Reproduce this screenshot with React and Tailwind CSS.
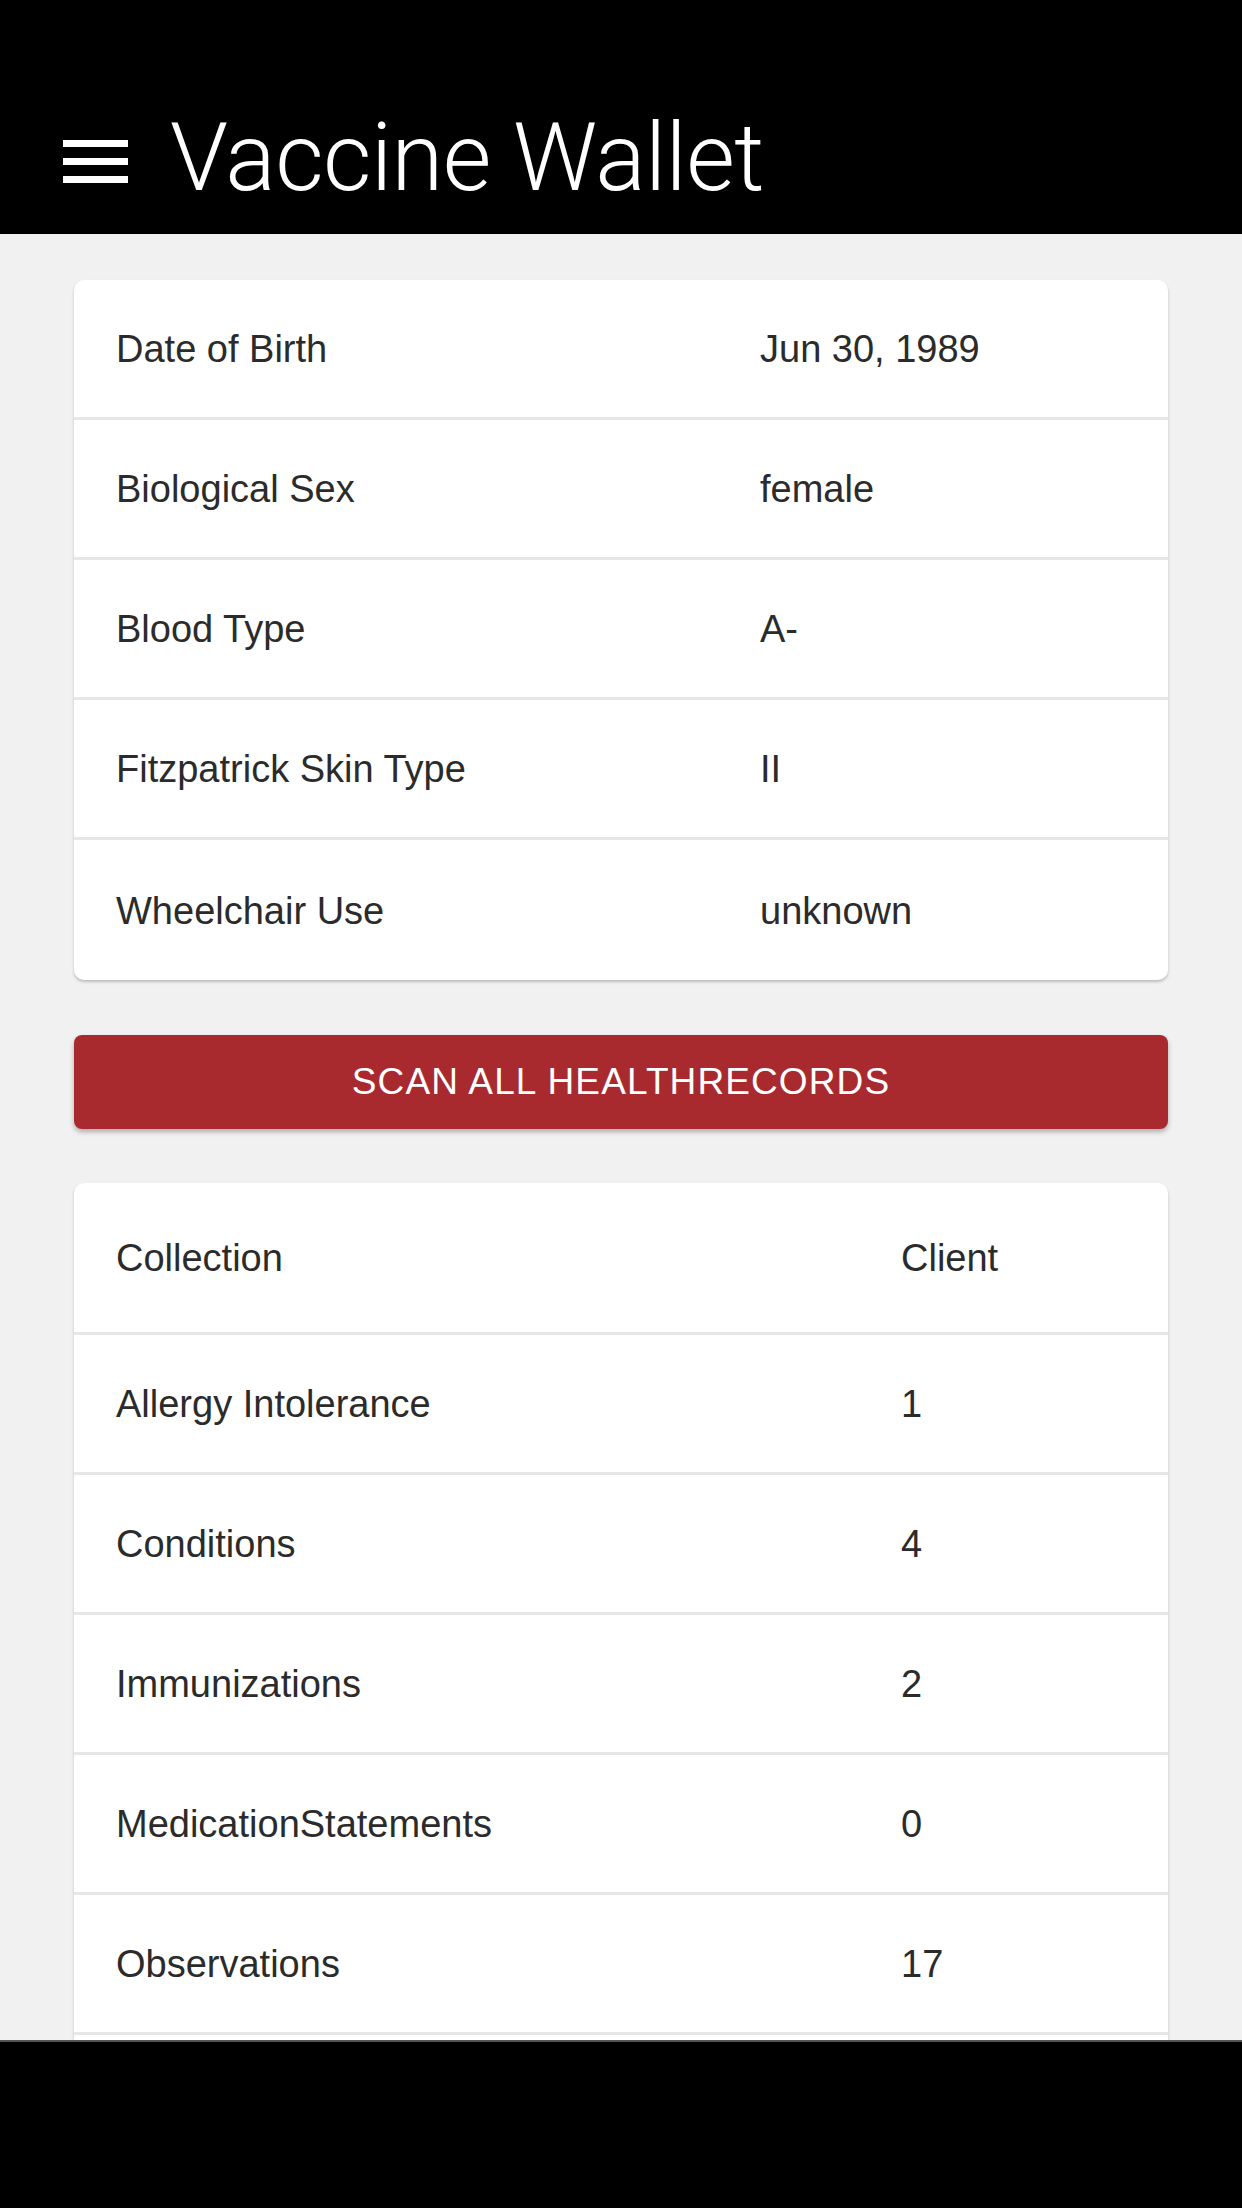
import React from "react";

const profile = [
  ["Date of Birth", "Jun 30, 1989"],
  ["Biological Sex", "female"],
  ["Blood Type", "A-"],
  ["Fitzpatrick Skin Type", "II"],
  ["Wheelchair Use", "unknown"],
];

const collections = [
  ["Allergy Intolerance", "1"],
  ["Conditions", "4"],
  ["Immunizations", "2"],
  ["MedicationStatements", "0"],
  ["Observations", "17"],
  ["", ""],
];

const font = { fontFamily: '"Liberation Sans", Arial, sans-serif' };

export default function App() {
  return (
    <div className="w-[1242px] h-[2208px] bg-[#f1f1f1] flex flex-col overflow-hidden" style={font}>
      <header className="h-[234px] shrink-0 bg-black flex items-start pt-[111px] pl-[63px]">
        <div className="mt-[29px] w-[65px] flex flex-col gap-[11px]">
          <div className="h-[7px] bg-white" />
          <div className="h-[7px] bg-white" />
          <div className="h-[7px] bg-white" />
        </div>
        <h1
          className="ml-[42px] text-white text-[94px] leading-none font-light tracking-[-0.006em]"
          style={{ fontFamily: 'Roboto, "Liberation Sans", sans-serif' }}
        >
          Vaccine Wallet
        </h1>
      </header>

      <main className="flex-1 overflow-hidden px-[74px] pt-[46px]">
        <div className="bg-white rounded-[10px] shadow-[0_2px_3px_rgba(0,0,0,0.22)] overflow-hidden">
          {profile.map(([k, v], i) => (
            <div
              key={k}
              className={`grid grid-cols-[637px_1fr] h-[140px] items-center text-[38px] text-[#2b2b2b] ${
                i < profile.length - 1 ? "border-b-[3px] border-[#e6e6e6]" : ""
              }`}
            >
              <div className="pl-[42px] pt-[2px]">{k}</div>
              <div className="pl-[49px] pt-[2px]">{v}</div>
            </div>
          ))}
        </div>

        <button className="mt-[55px] w-full h-[94px] bg-[#a82a2e] rounded-[8px] shadow-[0_3px_5px_rgba(0,0,0,0.28)] text-white text-[37px] tracking-[0.03em] uppercase flex items-center justify-center">
          Scan all healthrecords
        </button>

        <div className="mt-[54px] bg-white rounded-[10px] shadow-[0_2px_3px_rgba(0,0,0,0.22)] overflow-hidden">
          <div className="grid grid-cols-[783px_1fr] h-[152px] items-center text-[38px] text-[#2b2b2b] border-b-[3px] border-[#e6e6e6]">
            <div className="pl-[42px] pt-[2px]">Collection</div>
            <div className="pl-[44px] pt-[2px]">Client</div>
          </div>
          {collections.map(([k, v], i) => (
            <div
              key={i}
              className="grid grid-cols-[783px_1fr] h-[140px] items-center text-[38px] text-[#2b2b2b] border-b-[3px] border-[#e6e6e6]"
            >
              <div className="pl-[42px] pt-[2px]">{k}</div>
              <div className="pl-[44px] pt-[2px]">{v}</div>
            </div>
          ))}
        </div>
      </main>

      <footer className="h-[168px] shrink-0 bg-black border-t-[2px] border-[#555]" />
    </div>
  );
}
